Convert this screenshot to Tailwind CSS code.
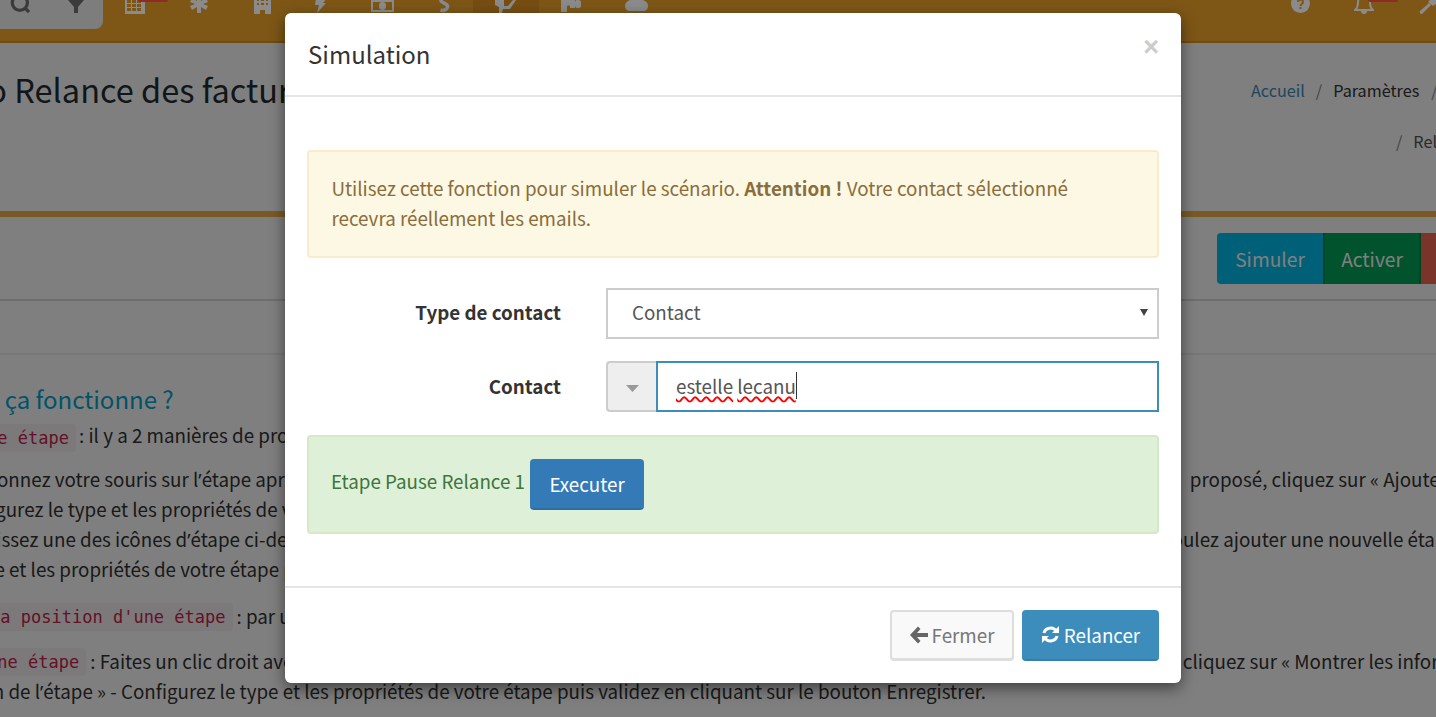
<!DOCTYPE html>
<html lang="fr"><head><meta charset="utf-8"><script src="https://cdn.jsdelivr.net/npm/@tailwindcss/browser@4"></script></head>
<body class="relative h-[717px] w-[1436px] overflow-hidden bg-white font-['Noto_Sans_CJK_SC','Source_Sans_Pro',sans-serif] text-[18.8px] leading-[30px] text-[#333]">
<!-- top nav -->
<header class="relative flex h-[43px] items-end border-b-2 border-[#e09a20] bg-[#fdae2f] text-white">
  <div class="ml-[-1px] flex h-[29px] w-[104px] self-start rounded-br-lg bg-[#fbfbfb]">
    <svg class="ml-[10px] mt-[-8px] h-[26px] w-[26px]" viewBox="0 0 24 24" fill="none" stroke="#777" stroke-width="3"><circle cx="10" cy="10" r="7"/><path d="M15 15l3.500 3.500"/></svg>
    <svg class="ml-[33px] h-[13px] w-[16px]" viewBox="0 0 16 13" fill="#777"><path d="M0 0h16L10 7v6H6V7z"/></svg>
  </div>
</header>
<div class="absolute inset-x-0 top-[44px]">
  <div class="flex h-[82px] items-start justify-between pt-[25px]">
    <h1 class="ml-[-125.500px] whitespace-nowrap text-[32.5px] leading-[40px] text-[#222d32]">Scénario Relance des factures</h1>
    <nav class="mr-[-100px] mt-[6px] flex w-[285px] flex-wrap text-[16.2px]">
      <span class="text-[#3c8dbc]">Accueil</span><span class="ml-[11px] mr-[11px] text-[#888]">/</span><span>Paramètres</span><span class="ml-[12px] text-[#888]">/</span>
    </nav>
  </div>
  <div class="flex h-[24px] justify-end whitespace-nowrap text-[16.2px] text-[#555]"><span class="mr-[-12px] w-[52px]"><span class="mr-[11px] text-[#888]">/</span>Relances</span></div>
</div>
<main class="absolute inset-x-0 top-[211px]">
  <div class="h-[90px] border-t-[6px] border-b-2 border-[#f4b448] border-b-[#ddd] pt-[16px]">
    <div class="ml-[1217px] flex h-[51px] w-[300px] overflow-hidden rounded text-[19.2px] text-white">
      <span class="flex w-[106px] items-center justify-center bg-[#00c0ef]">Simuler</span>
      <span class="flex w-[98px] items-center justify-center border-x-2 border-[#008d4c] bg-[#00a65a]">Activer</span>
      <span class="flex-1 bg-[#f56954]"></span>
    </div>
  </div>
  <div class="h-[54px] border-b-2 border-[#eee]"></div>
  <div class="whitespace-nowrap pt-[24px]">
    <h2 class="ml-[-112px] text-[24px] leading-[40px] text-[#00a7d0]">Comment ça fonctionne ?</h2>
    <div class="ml-[-112px] mt-[2px] flex h-[34px] items-center"><code class="rounded bg-[#f9f2f4] px-[7px] font-['DejaVu_Sans_Mono',monospace] text-[17px] leading-[28px] text-[#c7254e]">Ajouter une étape</code><span class="ml-[3px] pb-[6px]">: il y a 2 manières de procéder</span></div>
  </div>
</main>
<!-- body lines: left piece, then right piece past the dialog -->
<div class="absolute inset-x-0 top-[464px] whitespace-nowrap">
  <div class="flex h-[30px] justify-between"><span class="ml-[-52px]">Positionnez votre souris sur l<span class="font-['Noto_Sans']">’</span>étape après</span><span class="mr-[-11px]">proposé, cliquez sur « Ajouter</span></div>
  <div class="flex h-[30px]"><span class="ml-[-51px]">Configurez le type et les propriétés de votre</span></div>
  <div class="flex h-[30px] justify-between"><span class="ml-[-22px]">Glissez une des icônes d<span class="font-['Noto_Sans']">’</span>étape ci-dessus</span><span class="mr-[-21px]">si vous voulez ajouter une nouvelle étape</span></div>
  <div class="flex h-[30px]"><span class="ml-[-54px]">le type et les propriétés de votre étape puis</span></div>
  <div class="mt-[18px] flex h-[30px] items-center"><code class="ml-[-109px] rounded bg-[#f9f2f4] px-[7px] font-['DejaVu_Sans_Mono',monospace] text-[17px] leading-[28px] text-[#c7254e]">Modifier la position d'une étape</code><span class="ml-[4px] pb-[2px]">: par un</span></div>
  <div class="mt-[15px] flex h-[30px] items-center justify-between"><span class="flex items-center"><code class="ml-[-112px] rounded bg-[#f9f2f4] px-[7px] font-['DejaVu_Sans_Mono',monospace] text-[17px] leading-[28px] text-[#c7254e]">Modifier une étape</code><span class="ml-[4px] pb-[2px]">: Faites un clic droit avec</span></span><span class="mr-[-74px] pb-[2px]">cliquez sur « Montrer les informations</span></div>
  <div class="mt-[-1px] flex h-[30px]"><span class="ml-[-116px]">Configuration de l<span class="font-['Noto_Sans']">’</span>étape » - Configurez le type et les propriétés de votre étape puis validez en cliquant sur le bouton Enregistrer.</span></div>
</div>
<!-- dark backdrop -->
<div class="absolute inset-0 bg-black/50"></div>
<!-- nav icons, seen through the backdrop -->
<div class="absolute inset-x-0 top-0 h-[42px] overflow-hidden">
  <div class="absolute left-[473px] top-0 h-[38px] w-[66px] bg-[#774e12]"></div>
  <svg class="absolute left-[124px] top-[-8px] h-[22px] w-[22px]" viewBox="0 0 22 22" fill="#8b8b8b"><path d="M1 0h20v22H1zM3 8v3h4V8zm5 0v3h4V8zm5 0v3h4V8zM3 12v3h4v-3zm5 0v3h4v-3zm5 0v3h4v-3zM3 16v3h4v-3zm5 0v3h4v-3zm5 0v3h4v-3z" fill-rule="evenodd"/></svg>
  <div class="absolute left-[138px] top-0 h-[2px] w-[30px] rounded-b bg-[#8e2b27]"></div>
  <svg class="absolute left-[190px] top-[-5px] h-[18px] w-[18px]" viewBox="0 0 18 18" fill="#8b8b8b"><path d="M7 0h4v6l5-3 2 4-5 2 5 2-2 4-5-3v6H7v-6l-5 3-2-4 5-2-5-2 2-4 5 3z"/></svg>
  <svg class="absolute left-[254px] top-[-4px] h-[18px] w-[17px]" viewBox="0 0 17 18" fill="#8b8b8b"><path fill-rule="evenodd" d="M0 0h17v18h-6v-4H6v4H0zM3 3v2h2V3zm4 0v2h3V3zm5 0v2h2V3zM3 7v2h2V7zm4 0v2h3V7zm5 0v2h2V7z"/></svg>
  <svg class="absolute left-[315px] top-[-2px] h-[15px] w-[12px]" viewBox="0 0 12 15" fill="#8b8b8b"><path d="M1 0h11L8 5h3L2 15l2-8H0z"/></svg>
  <svg class="absolute left-[371px] top-0 h-[12px] w-[23px]" viewBox="0 0 23 12" fill="#8b8b8b"><path fill-rule="evenodd" d="M0 0h23v12H0zM2 2v8h19V2zm9.500 0a3.500 4 0 100 8 3.500 4 0 000-8z"/></svg>
  <svg class="absolute left-[439px] top-0 h-[13px] w-[11px]" viewBox="0 0 11 13" fill="none" stroke="#8b8b8b" stroke-width="3.500"><path d="M1.500 0c1 4 8 3 7 7-.500 3-4 4-7 3"/></svg>
  <svg class="absolute left-[495px] top-0 h-[13px] w-[22px]" viewBox="0 0 22 13" fill="#8b8b8b"><path d="M0 0h9v6l4 0 5-6h2l1 0-6 9-7 0-1 4H4V7L0 5z"/></svg>
  <svg class="absolute left-[561px] top-0 h-[12px] w-[20px]" viewBox="0 0 20 12" fill="#8b8b8b"><path d="M0 0h14v2a3 3 0 016 2 3 3 0 01-6 2v2H9v-2a2 2 0 00-3 0v6H0z"/></svg>
  <svg class="absolute left-[625px] top-0 h-[11px] w-[23px]" viewBox="0 0 23 11" fill="#8b8b8b"><path d="M5 0h13c3 1 5 3 5 6s-2 5-5 5H5C2 11 0 9 0 6s2-5 5-6z"/></svg>
  <svg class="absolute left-[1291px] top-[-6px] h-[19px] w-[19px]" viewBox="0 0 19 19"><circle cx="9.500" cy="9.500" r="9.500" fill="#8b8b8b"/><path d="M7 8c0-3 5-3 5 0 0 2-2.500 2-2.500 4" fill="none" stroke="#7f5717" stroke-width="2"/><rect x="8.500" y="13" width="2" height="2" fill="#7f5717"/></svg>
  <svg class="absolute left-[1354px] top-[-6px] h-[20px] w-[20px]" viewBox="0 0 20 20" fill="none" stroke="#8b8b8b" stroke-width="2"><path d="M1 16c3-2 3-5 3-8 0-7 12-7 12 0 0 3 0 6 3 8z"/><path d="M8 17a2 2 0 004 0" fill="#8b8b8b"/></svg>
  <div class="absolute left-[1368px] top-0 h-[2px] w-[30px] rounded-b bg-[#8e2b27]"></div>
  <svg class="absolute left-[1419px] top-0 h-[14px] w-[17px]" viewBox="0 0 17 14" fill="#8b8b8b"><path d="M1 11L10 3l2 2-9 9a2 2 0 01-2-3z"/><path d="M9 2L11 0h6v4l-3 2z"/></svg>
</div>
<!-- dialog -->
<section class="absolute left-[285px] top-[13px] h-[670px] w-[896px] rounded-md bg-white shadow-[0_5px_15px_rgba(0,0,0,0.5)]">
  <div class="relative h-[84px] border-b-2 border-[#e5e5e5] pl-[23px] pt-[26px]">
    <h3 class="text-[24px] leading-[30px] text-[#333]">Simulation</h3>
    <span class="absolute right-[22px] top-[16px] font-['Liberation_Sans',sans-serif] text-[27px] font-bold leading-[36px] text-[#ccc]">×</span>
  </div>
  <div class="px-[22px] pt-[53px]">
    <div class="h-[108px] rounded border-2 border-[#faebcc] bg-[#fcf8e3] px-[22.500px] py-[21px] text-[#8a6d3b]">Utilisez cette fonction pour simuler le scénario. <b>Attention !</b> Votre contact sélectionné<br>recevra réellement les emails.</div>
    <div class="mt-[30px] flex h-[51px] items-center">
      <label class="w-[254px] pb-[4px] text-right font-bold">Type de contact</label>
      <div class="relative ml-[45px] flex-1">
        <div class="flex h-[51px] items-center border-2 border-[#ccc] pb-[4px] pl-[24px] text-[#555]">Contact</div>
        <svg class="absolute right-[11px] top-[21px] h-[7px] w-[8px]" viewBox="0 0 8 7" fill="#444"><path d="M0 0h8L4 7z"/></svg>
      </div>
    </div>
    <div class="mt-[22px] flex h-[51px] items-center">
      <label class="w-[254px] pb-[2px] text-right font-bold">Contact</label>
      <div class="ml-[45px] flex h-[51px] flex-1">
        <span class="flex w-[50px] items-center justify-center rounded-l border-2 border-r-0 border-[#ccc] bg-[#eee] pt-[4px]"><svg class="h-[7px] w-[13px]" viewBox="0 0 13 7" fill="#999"><path d="M0 0h13L6.500 7z"/></svg></span>
        <div class="flex flex-1 items-center border-2 border-[#3c8dbc] pb-[2px] pl-[18px] text-[#555]"><span class="underline decoration-[#f00] decoration-wavy decoration-[1.500px] underline-offset-[2px]">estelle</span><span>&nbsp;</span><span class="underline decoration-[#f00] decoration-wavy decoration-[1.500px] underline-offset-[2px]">lecanu</span><span class="h-[27px] w-px bg-[#333]"></span></div>
      </div>
    </div>
    <div class="mt-[23px] flex h-[99px] items-center rounded border-2 border-[#d6e9c6] bg-[#dff0d8] pl-[22px] text-[#3c763d]"><span class="pb-[8px]">Etape Pause Relance 1</span>
      <button class="ml-[5px] h-[51px] w-[114px] rounded border-b-2 border-[#2e6da4] bg-[#337ab7] text-white">Executer</button>
    </div>
  </div>
  <footer class="mt-[52px] flex h-[96px] justify-end gap-[8px] border-t-2 border-[#e5e5e5] pr-[22px] pt-[22px]">
    <button class="flex h-[51px] w-[124px] items-center justify-center gap-[4px] rounded border-2 border-b-[3px] border-[#ddd] bg-[#f9f9f9] text-[#777]"><svg class="h-[18px] w-[18px]" viewBox="0 0 18 17" fill="#666"><path d="M8 0l2.500 2.500-3.500 4h11v4H7l3.500 4L8 17 0 8.500z"/></svg>Fermer</button>
    <button class="flex h-[51px] w-[137px] items-center justify-center gap-[4px] rounded border-b-2 border-[#367fa9] bg-[#3c8dbc] text-white"><svg class="h-[19px] w-[19px]" viewBox="0 0 19 19" fill="none" stroke="#fff" stroke-width="3"><path d="M3 8c1-5 9-7 12-2"/><path d="M16 11c-1 5-9 7-12 2"/><path d="M18 1v7h-7z" fill="#fff" stroke="none"/><path d="M1 18v-7h7z" fill="#fff" stroke="none"/></svg>Relancer</button>
  </footer>
</section>
</body></html>
